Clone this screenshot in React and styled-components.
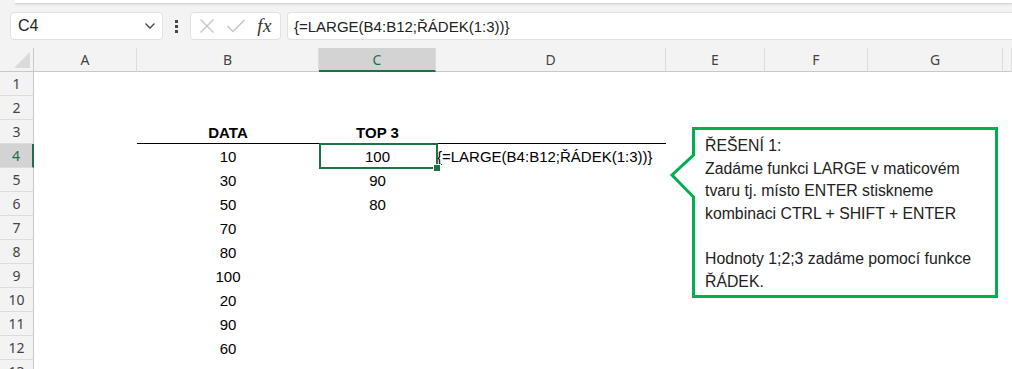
import React from 'react';
import styled, { createGlobalStyle } from 'styled-components';

const GlobalStyle = createGlobalStyle`
  html, body {
    margin: 0;
    padding: 0;
    background: #f3f3f3;
    overflow: hidden;
  }
`;

const Page = styled.div`
  width: 1012px;
  height: 369px;
  overflow: hidden;
  font-family: "Liberation Sans", Arial, sans-serif;
`;

const RibbonEdge = styled.div`
  height: 3px;
  margin-left: 15px;
  background: #fff;
  border-bottom: 1px solid #d6d6d6;
  box-shadow: 0 1px 2px rgba(0, 0, 0, 0.08);
`;

const FormulaBar = styled.div`
  display: flex;
  align-items: stretch;
  height: 28px;
  margin-top: 8px;
  padding-left: 10px;
`;

const Box = styled.div`
  display: flex;
  align-items: center;
  background: #fff;
  border: 1px solid #e1e1e1;
  border-radius: 4px;
  box-sizing: border-box;
`;

const NameBox = styled(Box)`
  width: 153px;
  padding: 0 6px 0 7px;
  justify-content: space-between;
  font-size: 16px;
  color: #222;
`;

const Grip = styled.div`
  width: 27px;
  display: flex;
  flex-direction: column;
  align-items: center;
  justify-content: center;
  gap: 2px;

  span {
    width: 3px;
    height: 3px;
    background: #444;
  }
`;

const FxBox = styled(Box)`
  width: 91px;
  padding: 0 8px 0 8px;
  justify-content: space-between;
`;

const FxLabel = styled.span`
  font-family: "Liberation Serif", "Times New Roman", serif;
  font-style: italic;
  font-size: 19px;
  color: #333;
  letter-spacing: 0.5px;
`;

const FormulaInput = styled(Box)`
  flex: 1;
  margin-left: 6px;
  border-right: none;
  border-radius: 4px 0 0 4px;
  padding-left: 6px;
  font-size: 15px;
  color: #222;
`;

const Sheet = styled.div`
  position: relative;
  margin-top: 8px;
  display: grid;
  grid-template-columns: 34px 103px 182px 117px 230px 99px 103px 135px 1fr;
  grid-auto-rows: 24px;
  background: #fff;
`;

const ColHead = styled.div`
  display: flex;
  align-items: center;
  justify-content: center;
  box-sizing: border-box;
  background: ${p => (p.$active ? '#d3d3d3' : '#f3f3f3')};
  color: ${p => (p.$active ? '#1e7145' : '#444')};
  border-right: 1px solid #dcdcdc;
  border-bottom: ${p => (p.$active ? '2px solid #1e7145' : '1px solid #c8c8c8')};
  font-family: "Noto Sans", "Open Sans", sans-serif;
  font-size: 14px;
`;

const Corner = styled.div`
  position: relative;
  background: #f3f3f3;
  border-right: 1px solid #c8c8c8;
  border-bottom: 1px solid #c8c8c8;
  box-sizing: border-box;

  svg {
    position: absolute;
    right: 3px;
    bottom: 3px;
  }
`;

const RowHead = styled.div`
  display: flex;
  align-items: center;
  justify-content: center;
  box-sizing: border-box;
  background: ${p => (p.$active ? '#d3d3d3' : '#f3f3f3')};
  color: ${p => (p.$active ? '#1e7145' : '#444')};
  border-right: ${p => (p.$active ? '2px solid #1e7145' : '1px solid #c8c8c8')};
  border-bottom: 1px solid #dcdcdc;
  font-family: "Noto Sans", "Open Sans", sans-serif;
  font-size: 14px;
`;

const Cell = styled.div`
  position: relative;
  display: flex;
  align-items: center;
  justify-content: ${p => (p.$left ? 'flex-start' : 'center')};
  padding-left: ${p => (p.$left ? '1px' : '0')};
  padding-top: 1px;
  box-sizing: border-box;
  font-size: 15px;
  font-weight: ${p => (p.$bold ? 700 : 400)};
  color: #000;
  white-space: nowrap;
  border-bottom: ${p => (p.$rule ? '1px solid #000' : 'none')};
`;

const Selection = styled.div`
  position: absolute;
  top: -1px;
  left: 0;
  right: -2px;
  bottom: -1px;
  border: 2px solid #1e7145;
  pointer-events: none;
  z-index: 2;

  &::after {
    content: '';
    position: absolute;
    right: -5px;
    bottom: -5px;
    width: 6px;
    height: 6px;
    background: #1e7145;
    border: 1px solid #fff;
  }
`;

const Callout = styled.div`
  position: absolute;
  left: 668px;
  top: 77px;
  width: 332px;
  height: 175px;
  z-index: 3;

  svg {
    position: absolute;
    inset: 0;
  }
`;

const CalloutText = styled.div`
  position: relative;
  padding: 10px 0 0 37px;
  font-family: "Liberation Sans", Arial, sans-serif;
  font-size: 15.8px;
  line-height: 22.6px;
  color: #222;
  white-space: pre;
`;

const cols = ['A', 'B', 'C', 'D', 'E', 'F', 'G', 'H'];

const rows = [
  {},
  {},
  { B: 'DATA', C: 'TOP 3', bold: true, rule: true },
  { B: '10', C: '100', D: '{=LARGE(B4:B12;ŘÁDEK(1:3))}' },
  { B: '30', C: '90' },
  { B: '50', C: '80' },
  { B: '70' },
  { B: '80' },
  { B: '100' },
  { B: '20' },
  { B: '90' },
  { B: '60' },
  {},
];

const calloutText = `ŘEŠENÍ 1:
Zadáme funkci LARGE v maticovém
tvaru tj. místo ENTER stiskneme
kombinaci CTRL + SHIFT + ENTER

Hodnoty 1;2;3 zadáme pomocí funkce
ŘÁDEK.`;

const App = () => {
  return (
    <Page>
      <GlobalStyle />
      <RibbonEdge />
      <FormulaBar>
        <NameBox>
          <span>C4</span>
          <svg width="12" height="8" viewBox="0 0 12 8">
            <path d="M1.5 1.5 L6 6 L10.5 1.5" fill="none" stroke="#444" strokeWidth="1.3" />
          </svg>
        </NameBox>
        <Grip>
          <span />
          <span />
          <span />
        </Grip>
        <FxBox>
          <svg width="16" height="16" viewBox="0 0 16 16">
            <path d="M1.5 1.5 L14.5 14.5 M14.5 1.5 L1.5 14.5" stroke="#c4c4c4" strokeWidth="1.3" />
          </svg>
          <svg width="20" height="16" viewBox="0 0 20 16">
            <path d="M1.5 8 L7 13.5 L18.5 2" fill="none" stroke="#c4c4c4" strokeWidth="1.3" />
          </svg>
          <FxLabel>fx</FxLabel>
        </FxBox>
        <FormulaInput>{'{=LARGE(B4:B12;ŘÁDEK(1:3))}'}</FormulaInput>
      </FormulaBar>

      <Sheet>
        <Corner>
          <svg width="16" height="16" viewBox="0 0 16 16">
            <path d="M16 0 L16 16 L0 16 Z" fill="#dadada" />
          </svg>
        </Corner>
        {cols.map(c => (
          <ColHead key={c} $active={c === 'C'}>
            {c === 'H' ? '' : c}
          </ColHead>
        ))}

        {rows.map((r, i) => (
          <React.Fragment key={i}>
            <RowHead $active={i === 3}>{i + 1}</RowHead>
            {cols.map(c => (
              <Cell
                key={c}
                $bold={r.bold}
                $left={c === 'D'}
                $rule={r.rule && (c === 'B' || c === 'C' || c === 'D')}
              >
                {r[c]}
                {i === 3 && c === 'C' && <Selection />}
              </Cell>
            ))}
          </React.Fragment>
        ))}

        <Callout>
          <svg width="332" height="175" viewBox="0 0 332 175">
            <path
              d="M25.5 3.5 H328.5 V171.5 H25.5 V72 L4 50 L25.5 30 Z"
              fill="#fff"
              stroke="#00b050"
              strokeWidth="3"
              strokeLinejoin="miter"
            />
          </svg>
          <CalloutText>{calloutText}</CalloutText>
        </Callout>
      </Sheet>
    </Page>
  );
};

export default App;
